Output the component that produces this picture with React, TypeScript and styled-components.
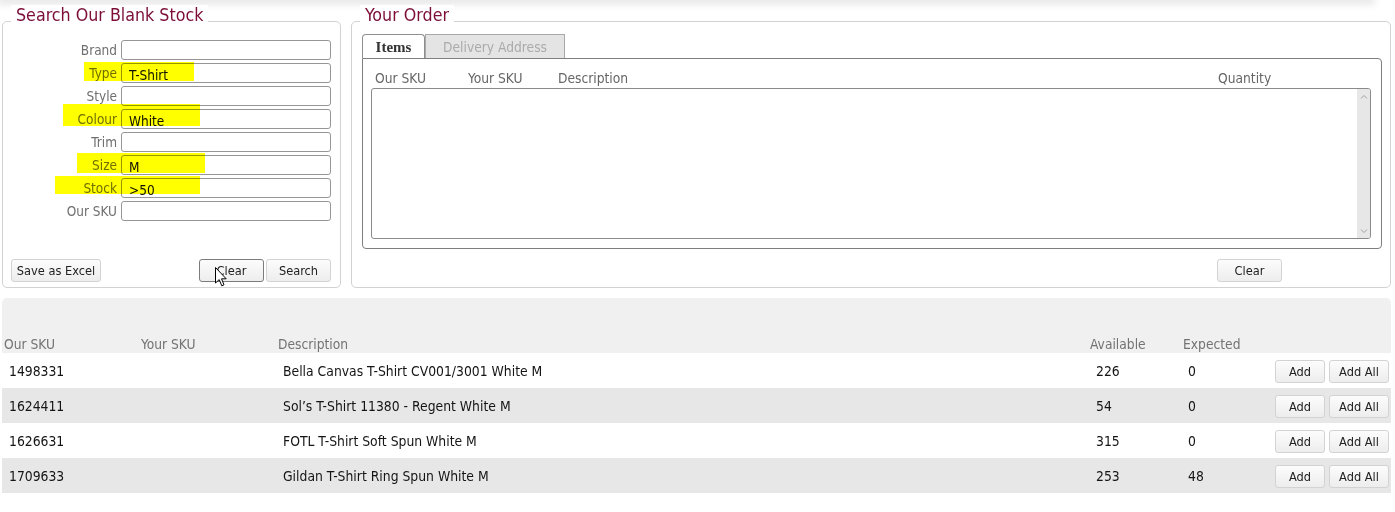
import React from "react";
import styled, { createGlobalStyle } from "styled-components";

const UI_FONT = `"DejaVu Sans Condensed", "Liberation Sans", Arial, sans-serif`;

const GlobalStyle = createGlobalStyle`
  html, body { margin: 0; padding: 0; background: #fff; }
  body { font-family: ${UI_FONT}; font-size: 13.5px; color: #1a1a1a; }
  * { box-sizing: border-box; }
`;

const Page = styled.div`
  position: relative;
  width: 1395px;
  height: 512px;
  overflow: hidden;
`;

const TopShade = styled.div`
  height: 0;
  width: 1372px;
  box-shadow: 0 0 9px 3px rgba(0, 0, 0, 0.15);
`;

const TopRow = styled.div`
  display: flex;
  gap: 10px;
  margin-top: 21px;
  padding-left: 2px;
`;

const Panel = styled.section<{ $width: number }>`
  position: relative;
  width: ${(p) => p.$width}px;
  height: 267px;
  border: 1px solid #d2d2d2;
  border-radius: 5px;
  display: flex;
  flex-direction: column;
`;

const SearchPanel = styled(Panel)`
  padding: 18px 9px 5px 8px;
`;

const OrderPanel = styled(Panel)`
  padding: 12px 8px 5px 10px;
`;

const Legend = styled.h2`
  position: absolute;
  top: -17px;
  left: 8px;
  margin: 0;
  padding: 0 5px;
  background: #fff;
  font-family: ${UI_FONT};
  font-weight: 400;
  font-size: 17.7px;
  line-height: 21px;
  color: #7b0d36;
`;

const FieldGrid = styled.div`
  display: grid;
  grid-template-columns: 1fr 210px;
  column-gap: 4px;
  row-gap: 3px;
`;

const FieldLabel = styled.label`
  text-align: right;
  color: #6f6f6f;
  font-size: 13.5px;
  line-height: 20px;
  white-space: nowrap;
`;

const TextField = styled.input`
  width: 210px;
  height: 20px;
  border: 1px solid #969696;
  border-radius: 3px;
  padding: 3px 7px 0;
  font-family: ${UI_FONT};
  font-size: 13.5px;
  color: #111;
  background: #fff;
  outline: none;
`;

const Actions = styled.div`
  margin-top: auto;
  display: flex;
  align-items: center;
  gap: 2px;
`;

const Spacer = styled.div`
  flex: 1;
`;

const Button = styled.button<{ $w: number; $focus?: boolean }>`
  width: ${(p) => p.$w}px;
  height: 23px;
  padding: 0;
  border: 1px solid ${(p) => (p.$focus ? "#7c7c7c" : "#d3d3d3")};
  border-radius: 3px;
  background: linear-gradient(#fcfcfc, #ededed);
  font-family: ${UI_FONT};
  font-size: 12.7px;
  color: #222;
  cursor: default;
`;

const Tabs = styled.div`
  display: flex;
  height: 24px;
`;

const Tab = styled.div<{ $active?: boolean; $w: number }>`
  width: ${(p) => p.$w}px;
  height: 24px;
  border: 1px solid ${(p) => (p.$active ? "#8f8f8f" : "#a8a8a8")};
  border-bottom: none;
  border-radius: ${(p) => (p.$active ? "4px 4px 0 0" : "0")};
  background: ${(p) => (p.$active ? "#fff" : "#e4e4e4")};
  color: ${(p) => (p.$active ? "#333" : "#ababab")};
  font-family: ${(p) => (p.$active ? `"Liberation Serif", "Times New Roman", serif` : UI_FONT)};
  font-weight: ${(p) => (p.$active ? 700 : 400)};
  font-size: ${(p) => (p.$active ? "15px" : "13.7px")};
  line-height: 23px;
  text-align: center;
  padding-top: 1px;
`;

const TabBody = styled.div`
  height: 191px;
  border: 1px solid #7f7f7f;
  border-radius: 0 4px 4px 4px;
  padding: 0 10px 9px 8px;
  display: flex;
  flex-direction: column;
`;

const OrderHead = styled.div`
  height: 29px;
  display: grid;
  grid-template-columns: 93px 90px 660px 1fr;
  align-items: end;
  padding: 0 0 2px 4px;
  color: #666;
  font-size: 13.7px;
  line-height: 16px;
`;

const ListBox = styled.div`
  flex: 1;
  border: 1px solid #8a8a8a;
  border-radius: 3px;
  display: flex;
  justify-content: flex-end;
  padding: 0;
  overflow: hidden;
`;

const ScrollTrack = styled.div`
  width: 13px;
  background: #e7e7e7;
  display: flex;
  flex-direction: column;
  justify-content: space-between;
  align-items: center;
  padding: 5px 0 4px;
`;

const Footer = styled.div`
  margin-top: auto;
  display: flex;
  justify-content: flex-end;
  padding-right: 100px;
`;

const Table = styled.div`
  margin: 10px 0 0 2px;
  width: 1389px;
`;

const COLS = "137px 137px 812px 93px 1fr auto";

const HeadRow = styled.div`
  display: grid;
  grid-template-columns: ${COLS};
  align-items: end;
  height: 55px;
  padding: 0 2px 1px;
  background: #f0f0f0;
  border-radius: 5px 5px 0 0;
  color: #737373;
  font-size: 13.7px;
  line-height: 16px;
`;

const DataRow = styled.div<{ $alt: boolean }>`
  display: grid;
  grid-template-columns: ${COLS};
  align-items: center;
  height: 35px;
  padding: 1px 2px 0;
  background: ${(p) => (p.$alt ? "#e7e7e7" : "#fff")};
  color: #141414;
  font-size: 13.8px;
`;

const Cell = styled.div<{ $shift?: number }>`
  padding-left: ${(p) => p.$shift ?? 5}px;
  white-space: nowrap;
`;

const RowButtons = styled.div`
  display: flex;
  gap: 4px;
`;

const Marker = styled.div`
  position: absolute;
  background: #ffff00;
  mix-blend-mode: multiply;
  pointer-events: none;
`;

const Cursor = styled.svg`
  position: absolute;
  left: 215px;
  top: 267px;
  pointer-events: none;
`;

const fields = [
  { label: "Brand", value: "" },
  { label: "Type", value: "T-Shirt" },
  { label: "Style", value: "" },
  { label: "Colour", value: "White" },
  { label: "Trim", value: "" },
  { label: "Size", value: "M" },
  { label: "Stock", value: ">50" },
  { label: "Our SKU", value: "" },
];

const marks = [
  { x: 84, y: 62, w: 110, h: 19 },
  { x: 63, y: 104, w: 137, h: 22 },
  { x: 77, y: 153, w: 128, h: 20 },
  { x: 55, y: 176, w: 145, h: 18 },
];

const rows = [
  { sku: "1498331", desc: "Bella Canvas T-Shirt CV001/3001 White M", avail: "226", exp: "0" },
  { sku: "1624411", desc: "Sol\u2019s T-Shirt 11380 - Regent White M", avail: "54", exp: "0" },
  { sku: "1626631", desc: "FOTL T-Shirt Soft Spun White M", avail: "315", exp: "0" },
  { sku: "1709633", desc: "Gildan T-Shirt Ring Spun White M", avail: "253", exp: "48" },
];

const Chevron = ({ up }: { up: boolean }) => (
  <svg width="8" height="5" viewBox="0 0 8 5">
    <polyline
      points={up ? "1,4.5 4,1.5 7,4.5" : "1,0.5 4,3.5 7,0.5"}
      fill="none"
      stroke="#a0a0a0"
      strokeWidth="1"
    />
  </svg>
);

export default function App() {
  return (
    <Page>
      <GlobalStyle />
      <TopShade />
      <TopRow>
        <SearchPanel $width={339}>
          <Legend>Search Our Blank Stock</Legend>
          <FieldGrid>
            {fields.map((f) => (
              <React.Fragment key={f.label}>
                <FieldLabel>{f.label}</FieldLabel>
                <TextField defaultValue={f.value} />
              </React.Fragment>
            ))}
          </FieldGrid>
          <Actions>
            <Button $w={90}>Save as Excel</Button>
            <Spacer />
            <Button $w={65} $focus>
              Clear
            </Button>
            <Button $w={65}>Search</Button>
          </Actions>
        </SearchPanel>
        <OrderPanel $width={1040}>
          <Legend>Your Order</Legend>
          <Tabs>
            <Tab $active $w={63}>
              Items
            </Tab>
            <Tab $w={140}>Delivery Address</Tab>
          </Tabs>
          <TabBody>
            <OrderHead>
              <span>Our SKU</span>
              <span>Your SKU</span>
              <span>Description</span>
              <span>Quantity</span>
            </OrderHead>
            <ListBox>
              <ScrollTrack>
                <Chevron up />
                <Chevron up={false} />
              </ScrollTrack>
            </ListBox>
          </TabBody>
          <Footer>
            <Button $w={65}>Clear</Button>
          </Footer>
        </OrderPanel>
      </TopRow>
      <Table>
        <HeadRow>
          <Cell $shift={0}>Our SKU</Cell>
          <Cell $shift={0}>Your SKU</Cell>
          <Cell $shift={0}>Description</Cell>
          <Cell $shift={0}>Available</Cell>
          <Cell $shift={0}>Expected</Cell>
          <Cell $shift={0} />
        </HeadRow>
        {rows.map((r, i) => (
          <DataRow key={r.sku} $alt={i % 2 === 1}>
            <Cell>{r.sku}</Cell>
            <Cell />
            <Cell>{r.desc}</Cell>
            <Cell $shift={6}>{r.avail}</Cell>
            <Cell>{r.exp}</Cell>
            <RowButtons>
              <Button $w={50}>Add</Button>
              <Button $w={60}>Add All</Button>
            </RowButtons>
          </DataRow>
        ))}
      </Table>
      {marks.map((m, i) => (
        <Marker key={i} style={{ left: m.x, top: m.y, width: m.w, height: m.h }} />
      ))}
      <Cursor width="13" height="21" viewBox="0 0 13 21">
        <path
          d="M0.5,0.5 L0.5,16 L4.2,12.6 L6.8,18.8 L9,17.8 L6.5,11.8 L11.2,11.8 Z"
          fill="#fff"
          stroke="#000"
          strokeWidth="1"
          strokeLinejoin="miter"
        />
      </Cursor>
    </Page>
  );
}
